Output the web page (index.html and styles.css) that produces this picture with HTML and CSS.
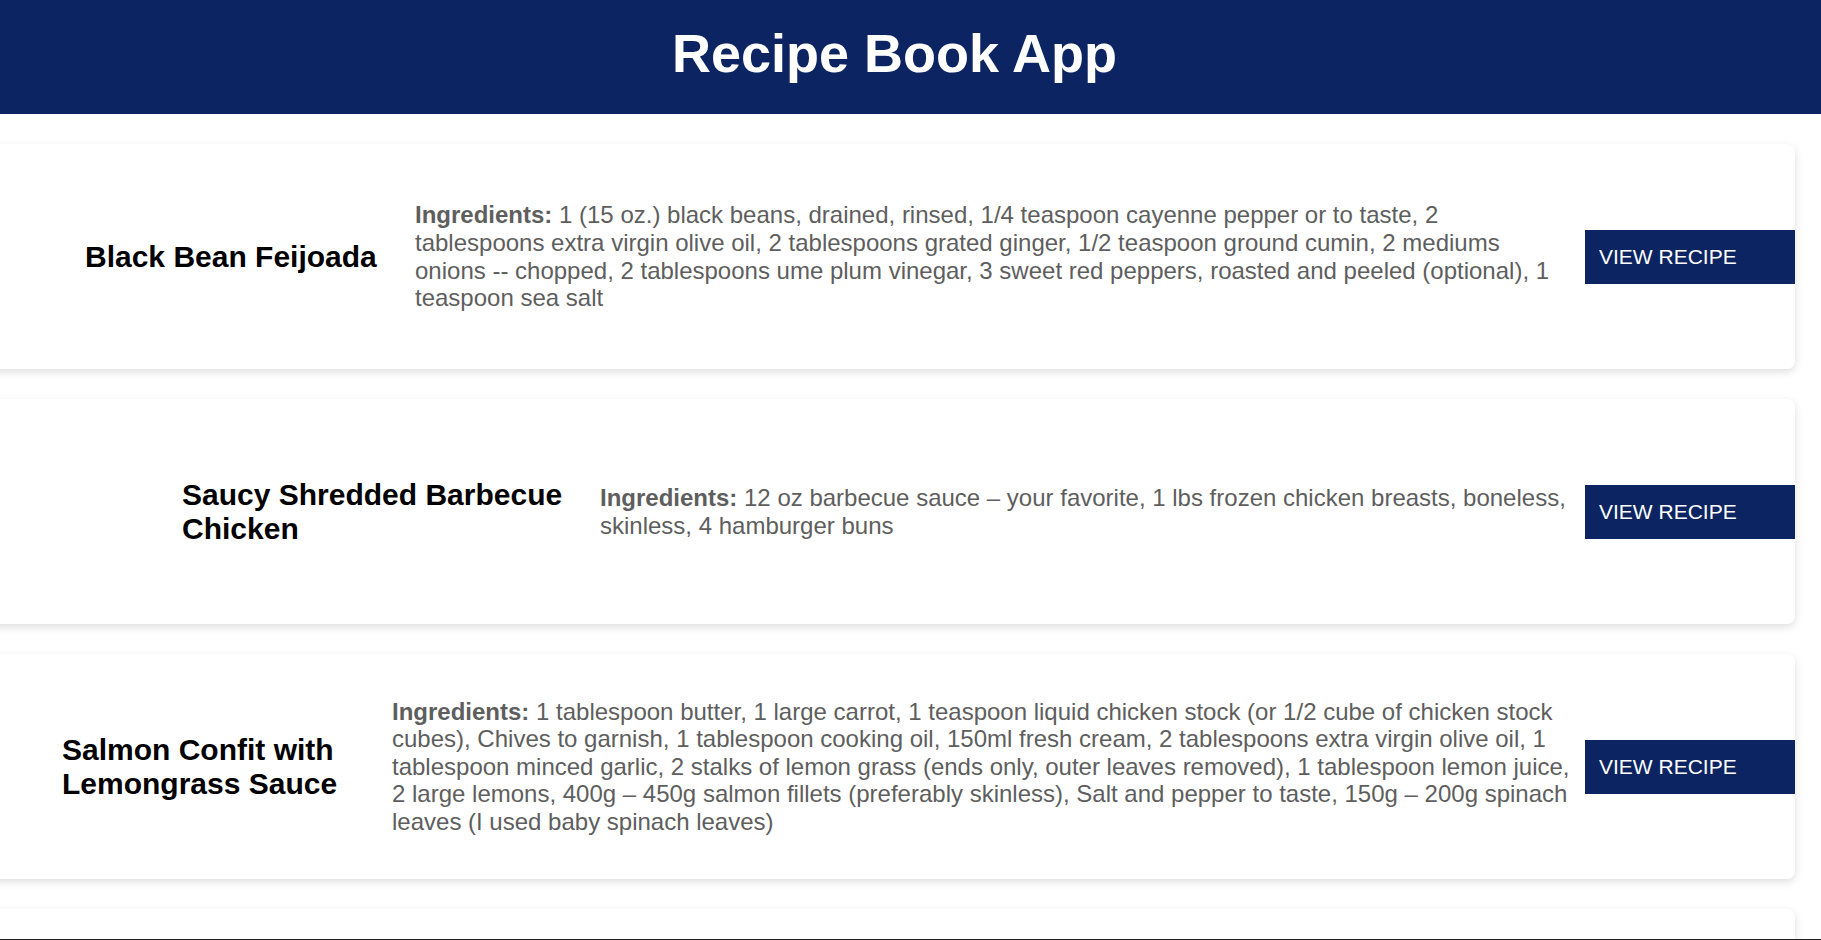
FILE: index.html
```html
<!DOCTYPE html>
<html lang="en">
<head>
<meta charset="utf-8">
<title>Recipe Book App</title>
<link rel="stylesheet" href="styles.css">
</head>
<body>
<header class="app-header">
  <h1 class="app-title">Recipe Book App</h1>
</header>
<main class="recipe-list">
  <article class="recipe recipe--one">
    <h2 class="recipe__title">Black Bean Feijoada</h2>
    <p class="recipe__ingredients"><strong>Ingredients:</strong> 1 (15 oz.) black beans, drained, rinsed, 1/4 teaspoon cayenne pepper or to taste, 2 tablespoons extra virgin olive oil, 2 tablespoons grated ginger, 1/2 teaspoon ground cumin, 2 mediums onions -- chopped, 2 tablespoons ume plum vinegar, 3 sweet red peppers, roasted and peeled (optional), 1 teaspoon sea salt</p>
    <button class="recipe__button">VIEW RECIPE</button>
  </article>
  <article class="recipe recipe--two">
    <h2 class="recipe__title">Saucy Shredded Barbecue Chicken</h2>
    <p class="recipe__ingredients"><strong>Ingredients:</strong> 12 oz barbecue sauce – your favorite, 1 lbs frozen chicken breasts, boneless, skinless, 4 hamburger buns</p>
    <button class="recipe__button">VIEW RECIPE</button>
  </article>
  <article class="recipe recipe--three">
    <h2 class="recipe__title">Salmon Confit with Lemongrass Sauce</h2>
    <p class="recipe__ingredients"><strong>Ingredients:</strong> 1 tablespoon butter, 1 large carrot, 1 teaspoon liquid chicken stock (or 1/2 cube of chicken stock cubes), Chives to garnish, 1 tablespoon cooking oil, 150ml fresh cream, 2 tablespoons extra virgin olive oil, 1 tablespoon minced garlic, 2 stalks of lemon grass (ends only, outer leaves removed), 1 tablespoon lemon juice, 2 large lemons, 400g – 450g salmon fillets (preferably skinless), Salt and pepper to taste, 150g – 200g spinach leaves (I used baby spinach leaves)</p>
    <button class="recipe__button">VIEW RECIPE</button>
  </article>
  <article class="recipe recipe--four"></article>
</main>
<div class="bottom-edge"></div>
</body>
</html>
```
FILE: styles.css
```css
html, body {
  margin: 0;
  padding: 0;
  background: #ffffff;
  font-family: "Liberation Sans", Arial, sans-serif;
  overflow: hidden;
}

.app-header {
  background: #0c2461;
  height: 114px;
  box-sizing: border-box;
  padding: 22px 32px 0 0;
}

.app-title {
  margin: 0;
  color: #ffffff;
  font-size: 54px;
  line-height: 62px;
  font-weight: 700;
  text-align: center;
}

.recipe-list {
  display: flex;
  flex-direction: column;
  gap: 30px;
  padding: 30px 26px 30px 0;
  margin-left: -20px;
}

.recipe {
  display: flex;
  align-items: center;
  height: 225px;
  box-sizing: border-box;
  background: #ffffff;
  border-radius: 8px;
  box-shadow: 0 3px 9px rgba(0, 0, 0, 0.13);
  overflow: hidden;
}

.recipe__title {
  flex: none;
  margin: 0;
  color: #000000;
  font-size: 30px;
  line-height: 34px;
  font-weight: 700;
}

.recipe__ingredients {
  flex: 1;
  min-width: 0;
  margin: 0 15px 0 0;
  color: #5e5e5e;
  font-size: 24px;
  line-height: 27.6px;
}

.recipe__ingredients strong {
  font-weight: 700;
}

.recipe__button {
  flex: none;
  width: 210px;
  height: 54px;
  margin: 0;
  padding: 0 0 0 14px;
  border: none;
  border-radius: 0;
  background: #0c2461;
  color: #ffffff;
  font-family: "Liberation Sans", Arial, sans-serif;
  font-size: 21px;
  text-align: left;
  cursor: pointer;
}

.recipe--one .recipe__title {
  margin-left: 105px;
  width: 296px;
  margin-right: 34px;
}

.recipe--two .recipe__title {
  margin-left: 202px;
  width: 384px;
  margin-right: 34px;
}

.recipe--three .recipe__title {
  margin-left: 82px;
  width: 292px;
  margin-right: 38px;
}

.bottom-edge {
  position: fixed;
  left: 0;
  right: 0;
  bottom: 0;
  height: 1px;
  background: #1e1e1e;
}
```
